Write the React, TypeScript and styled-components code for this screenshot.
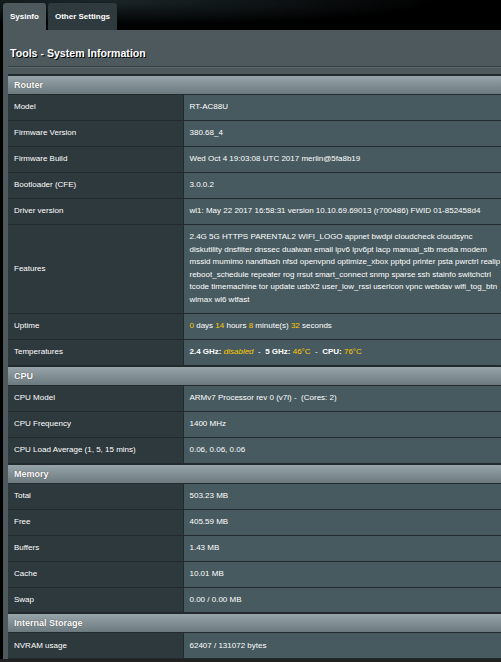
import React from "react";
import styled, { createGlobalStyle } from "styled-components";

const GlobalStyle = createGlobalStyle`
  html, body {
    margin: 0;
    padding: 0;
    background: #000;
    overflow: hidden;
  }
  body {
    font-family: "Liberation Sans", Arial, sans-serif;
    color: #fff;
  }
`;

type Row = { label: string; value: React.ReactNode };
type Section = { title: string; rows: Row[] };

const Hi = styled.span`
  color: #ffcc00;
`;

const Off = styled.span`
  color: #ffcc00;
  font-style: italic;
`;

const sections: Section[] = [
  {
    title: "Router",
    rows: [
      { label: "Model", value: "RT-AC88U" },
      { label: "Firmware Version", value: "380.68_4" },
      { label: "Firmware Build", value: "Wed Oct 4 19:03:08 UTC 2017 merlin@5fa8b19" },
      { label: "Bootloader (CFE)", value: "3.0.0.2" },
      {
        label: "Driver version",
        value: "wl1: May 22 2017 16:58:31 version 10.10.69.69013 (r700486) FWID 01-852458d4",
      },
      {
        label: "Features",
        value:
          "2.4G 5G HTTPS PARENTAL2 WIFI_LOGO appnet bwdpi cloudcheck cloudsync diskutility dnsfilter dnssec dualwan email ipv6 ipv6pt lacp manual_stb media modem mssid mumimo nandflash nfsd openvpnd optimize_xbox pptpd printer psta pwrctrl realip reboot_schedule repeater rog rrsut smart_connect snmp sparse ssh stainfo switchctrl tcode timemachine tor update usbX2 user_low_rssi usericon vpnc webdav wifi_tog_btn wimax wl6 wtfast",
      },
      {
        label: "Uptime",
        value: (
          <>
            <Hi>0</Hi> days <Hi>14</Hi> hours <Hi>8</Hi> minute(s) <Hi>32</Hi> seconds
          </>
        ),
      },
      {
        label: "Temperatures",
        value: (
          <>
            <b>2.4 GHz:</b> <Off>disabled</Off> &nbsp;-&nbsp; <b>5 GHz:</b> <Hi>46°C</Hi> &nbsp;-&nbsp;{" "}
            <b>CPU:</b> <Hi>76°C</Hi>
          </>
        ),
      },
    ],
  },
  {
    title: "CPU",
    rows: [
      { label: "CPU Model", value: "ARMv7 Processor rev 0 (v7l)  -  \u00a0(Cores: 2)" },
      { label: "CPU Frequency", value: "1400 MHz" },
      { label: "CPU Load Average (1, 5, 15 mins)", value: "0.06, 0.06, 0.06" },
    ],
  },
  {
    title: "Memory",
    rows: [
      { label: "Total", value: "503.23 MB" },
      { label: "Free", value: "405.59 MB" },
      { label: "Buffers", value: "1.43 MB" },
      { label: "Cache", value: "10.01 MB" },
      { label: "Swap", value: "0.00 / 0.00 MB" },
    ],
  },
  {
    title: "Internal Storage",
    rows: [{ label: "NVRAM usage", value: "62407 / 131072 bytes" }],
  },
];

const Page = styled.div`
  width: 501px;
  height: 662px;
  overflow: hidden;
  background: #000;
`;

const TabBar = styled.div`
  display: flex;
  gap: 2px;
  height: 30px;
  padding: 3px 0 0 3px;
  box-sizing: border-box;
  background: radial-gradient(ellipse at 20% 0%, #1b2629 0%, #000 60%);
`;

const Tab = styled.div<{ $active?: boolean }>`
  display: flex;
  align-items: center;
  padding: 0 7px;
  border-radius: 3px 3px 0 0;
  font-size: 8px;
  font-weight: bold;
  color: #fff;
  background: ${(p) => (p.$active ? "#4d595d" : "#2e3a3e")};
`;

const Panel = styled.div`
  margin-left: 3px;
  width: 510px;
  background: #4d595d;
  padding: 0 0 0 5px;
  box-sizing: border-box;
`;

const Title = styled.div`
  padding: 17px 0 0 2px;
  line-height: 12px;
  font-size: 10.6px;
  font-weight: bold;
  color: #fff;
  text-shadow: 1px 1px 0 #000;
`;

const SplitLine = styled.div`
  margin-top: 7px;
  height: 0;
  border-top: 1px solid #343f43;
  border-bottom: 1px solid #5a676b;
`;

const Table = styled.table`
  margin-top: 6px;
  width: 502px;
  border-collapse: collapse;
  table-layout: fixed;
`;

const HeadCell = styled.td`
  height: 18px;
  padding: 0 6px;
  font-size: 9px;
  font-weight: bold;
  color: #fff;
  text-shadow: 0 0 1px #333;
  background: linear-gradient(#97a4a9 0%, #6c7a80 100%);
  border-top: 2px solid #222a2d;
  border-bottom: 1px solid #222a2d;
`;

const LabelCell = styled.th`
  padding: 6.2px 6px;
  text-align: left;
  font-size: 8px;
  font-weight: normal;
  line-height: 12.6px;
  color: #fff;
  background: #2e393d;
  border-bottom: 1px solid #222a2d;
  border-right: 1px solid #222a2d;
`;

const ValueCell = styled.td`
  padding: 6.2px 6px;
  font-size: 8px;
  line-height: 12.6px;
  color: #fff;
  background: #475a5f;
  border-bottom: 1px solid #222a2d;
  word-wrap: break-word;

  b {
    font-weight: bold;
  }
`;

const Bottom = styled.div`
  height: 20px;
  background: #1f2122;
`;

export default function App() {
  return (
    <Page>
      <GlobalStyle />
      <TabBar>
        <Tab $active>Sysinfo</Tab>
        <Tab>Other Settings</Tab>
      </TabBar>
      <Panel>
        <Title>Tools - System Information</Title>
        <SplitLine />
        <Table>
          <colgroup>
            <col style={{ width: 175 }} />
            <col />
          </colgroup>
          {sections.map((s) => (
            <tbody key={s.title}>
              <tr>
                <HeadCell colSpan={2}>{s.title}</HeadCell>
              </tr>
              {s.rows.map((r) => (
                <tr key={r.label}>
                  <LabelCell>{r.label}</LabelCell>
                  <ValueCell>{r.value}</ValueCell>
                </tr>
              ))}
            </tbody>
          ))}
        </Table>
      </Panel>
      <Bottom />
    </Page>
  );
}
